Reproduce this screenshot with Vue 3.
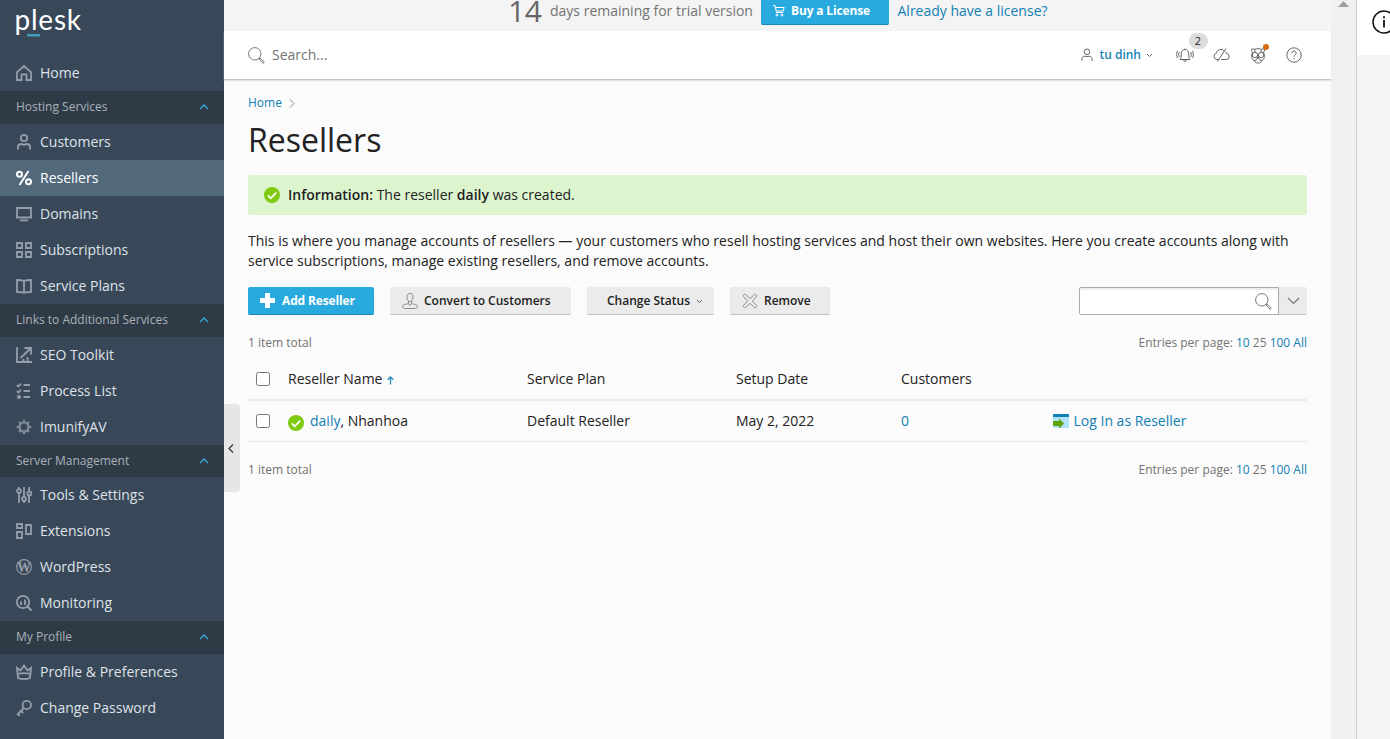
<script setup>
import { ref } from 'vue'

const sections = [
  { title: '', items: [{ label: 'Home', icon: 'home' }] },
  {
    title: 'Hosting Services',
    items: [
      { label: 'Customers', icon: 'user' },
      { label: 'Resellers', icon: 'percent', active: true },
      { label: 'Domains', icon: 'monitor' },
      { label: 'Subscriptions', icon: 'grid' },
      { label: 'Service Plans', icon: 'book' },
    ],
  },
  {
    title: 'Links to Additional Services',
    items: [
      { label: 'SEO Toolkit', icon: 'seo' },
      { label: 'Process List', icon: 'list' },
      { label: 'ImunifyAV', icon: 'gear' },
    ],
  },
  {
    title: 'Server Management',
    short: true,
    items: [
      { label: 'Tools & Settings', icon: 'sliders' },
      { label: 'Extensions', icon: 'blocks' },
      { label: 'WordPress', icon: 'wordpress' },
      { label: 'Monitoring', icon: 'monitoring' },
    ],
  },
  {
    title: 'My Profile',
    items: [
      { label: 'Profile & Preferences', icon: 'crown' },
      { label: 'Change Password', icon: 'key' },
    ],
  },
]

const icons = {
  home: '<path d="M1 15V7.2L8 1l7 6.200V15h-4.500V9.500h-5V15z"/>',
  user: '<circle cx="8" cy="4" r="3.200"/><path d="M2 15.500V13c0-2 1.500-3 3.500-3 1 0 1.500.8 2.500.8s1.500-.8 2.500-.8c2 0 3.500 1 3.500 3v2.500"/>',
  percent: '<g stroke-width="2"><circle cx="3.500" cy="4.200" r="2.500"/><circle cx="12.500" cy="11.800" r="2.500"/><path d="M12.500 1L3.500 15"/></g>',
  monitor: '<path d="M1 2h14v9.500H1zM4 14.300h8"/>',
  grid: '<path d="M1 1h5v5H1zM10 1h5v5h-5zM1 10h5v5H1zM10 10h5v5h-5z"/>',
  book: '<path d="M8 3C6.500 2 4 2 1 2v12c3 0 5.500 0 7 .7C9.500 14 12 14 15 14V2c-3 0-5.500 0-7 1zM8 3v12"/>',
  seo: '<path d="M1 0v15h15M4.500 11L14 2M8.500 1H15v6.500M7.500 15v-3M11.500 15v-5"/>',
  list: '<path d="M7.500 2H14M7.500 8H14M7.500 14H14M1 2l1.500 1.500L5 .5M1 8l1.500 1.500L5 6.500"/><circle cx="3" cy="14" r="1.200" fill="currentColor"/>',
  gear: '<g opacity=".8"><circle cx="8" cy="8" r="4.500" stroke-width="2.200"/><path stroke-width="2" d="M8 .7v2.500M8 12.800v2.500M.7 8h2.500M12.800 8h2.500M3 3l1.500 1.500M11.500 11.500L13 13M13 3l-1.500 1.500M4.500 11.500L3 13"/></g>',
  sliders: '<path d="M3 0v2M3 6v10M8 0v10M8 14v2M13 0v4M13 9v7"/><circle cx="3" cy="4" r="2"/><circle cx="8" cy="12" r="2"/><circle cx="13.300" cy="6.500" r="2"/>',
  blocks: '<path d="M1 1h5v4H1zM1 9h5v6H1zM10 2h5v9h-5z"/>',
  wordpress: '<circle cx="8" cy="8" r="7.300" stroke-width="1.200"/><text x="8" y="13.300" text-anchor="middle" textLength="14" lengthAdjust="spacingAndGlyphs" font-family="Liberation Serif" font-weight="700" font-size="15.500" fill="currentColor" stroke="none">W</text>',
  monitoring: '<circle cx="7" cy="7" r="6.200"/><path d="M11.500 11.500l4 4" stroke-width="2.200"/><path d="M5 10V6.500M9 10V4.500"/>',
  crown: '<path d="M2 14L1 4l3.500 2.500L8 1.500l3.500 5L15 4l-1 10c-3 1.500-9 1.500-12 0zM2 10c3-1.300 9-1.300 12 0"/>',
  key: '<circle cx="10.800" cy="5" r="4.200"/><path d="M7.700 8.200L1 15M2 14l2 1.800M5 11l2.200 2"/>',
}

const selectAll = ref(false)
const selectRow = ref(false)
const query = ref('')
</script>

<template>
  <div class="page">
    <aside class="sidebar">
      <div class="brand">
        <svg width="80" height="40" viewBox="0 0 80 40">
          <text class="brand-text" x="-.5" y="24" textLength="66.500">plesk</text>
          <rect x="12" y="28" width="13" height="2.500" fill="#3f9dbd" />
        </svg>
      </div>
      <nav>
        <div v-for="(s, i) in sections" :key="i">
          <div v-if="s.title" class="section" :class="{ short: s.short }">
            <span>{{ s.title }}</span>
            <svg width="10" height="6" viewBox="0 0 10 6"><path d="M1 5l4-4 4 4" /></svg>
          </div>
          <a v-for="it in s.items" :key="it.label" class="item" :class="{ active: it.active }">
            <svg width="16" height="16" viewBox="0 0 16 16" v-html="icons[it.icon]"></svg>
            <span>{{ it.label }}</span>
          </a>
        </div>
      </nav>
    </aside>

    <div class="main">
      <div class="trial">
        <span class="days">14</span>
        <span class="remain">days remaining for trial version</span>
        <a class="buy">
          <svg width="12" height="13" viewBox="0 0 12 13" fill="none" stroke="#fff"><path d="M0 1.500h2l1.500 7h6.800M2.500 3.500h8.700l-1 3.500H3.300" /><circle cx="4" cy="11" r="1" /><circle cx="9" cy="11" r="1" /></svg>
          <span>Buy a License</span>
        </a>
        <a class="link have">Already have a license?</a>
      </div>

      <header class="topbar">
        <svg class="mag" width="17" height="17" viewBox="0 0 17 17"><circle cx="6.800" cy="6.800" r="6.200" /><path d="M11 12l1-1 4.300 4-1.300 1.300z" /></svg>
        <span class="ph">Search...</span>
        <div class="tools">
          <svg class="t-user" width="12" height="14" viewBox="0 0 12 14"><circle cx="6" cy="3.800" r="2.800" /><path d="M1 13v-2.300C1 9 2.200 8.200 4 8.200c.8 0 1.200.5 2 .5s1.200-.5 2-.5c1.800 0 3 .8 3 2.500V13" /></svg>
          <span class="uname">tu dinh</span>
          <svg class="t-chev" width="7" height="5" viewBox="0 0 7 5"><path d="M1 1l2.500 2.500L6 1" /></svg>
          <div class="bell">
            <svg width="18" height="15" viewBox="0 0 18 15"><path d="M4 11.500c1.200-1 1.200-2.500 1.200-5C5.200 3 7 1.500 9 1.500s3.800 1.500 3.800 5c0 2.500 0 4 1.200 5zM7.500 12c.2 1.700 2.800 1.700 3 0M9 .5v1M3.300 4c-.8 1.300-.8 3.700 0 5M1.600 2.800c-1.300 2-1.300 5.400 0 7.400M14.700 4c.8 1.300.8 3.700 0 5M16.400 2.800c1.300 2 1.300 5.400 0 7.400" /></svg>
            <b class="count">2</b>
          </div>
          <svg class="t-cloud" width="17" height="14" viewBox="0 0 17 14"><path d="M6 11.500H4A3.200 3.200 0 0 1 3.500 5.200C4 2.500 6 1.500 8 1.500c1 0 2 .3 2.800 1M8 11.500h5.200a2.900 2.900 0 0 0 .2-5.900c0-.8-.2-1.500-.6-2.100M4.500 13.500L13 .5" /></svg>
          <div class="bear">
            <svg width="16" height="17" viewBox="0 0 16 17"><path d="M2.500 5C.8 4 1 1.800 2.800 1.800c.8 0 1.400.2 1.900.6 2-1 4.600-1 6.600 0 .5-.4 1.100-.6 1.900-.6 1.800 0 2 2.200.3 3.200M4.700 2.400L5 5M11.300 2.400L11 5M2.600 5C1.600 7 1.500 9 1.700 10.500 2.200 12.300 3 13 4 13.500M13.400 5c1 2 1.100 4 .9 5.500-.5 1.800-1.300 2.500-2.300 3M3.800 12.500c0 4.700 8.400 4.700 8.400 0M6.800 10h2.400L8 11.300zM5.500 14c.3-1.800 1.300-2.500 2.500-2.700 1.200.2 2.200.9 2.500 2.700" /><circle cx="4.900" cy="8" r="2.700" /><circle cx="11.100" cy="8" r="2.700" /></svg>
            <i class="dot"></i>
          </div>
          <svg class="t-help" width="16" height="16" viewBox="0 0 16 16"><circle cx="8" cy="8" r="7.200" /><path d="M5.800 6.300c0-3 4.400-2.800 4.400-.2C10.200 8 8 7.800 8 9.800M8 11v1.300" /></svg>
        </div>
      </header>

      <main class="content">
        <div class="crumbs">
          <a class="link">Home</a>
          <svg width="6" height="9" viewBox="0 0 6 9"><path d="M1 .5l4 4-4 4" /></svg>
        </div>
        <h1>Resellers</h1>

        <div class="info">
          <svg width="16" height="16" viewBox="0 0 16 16"><circle cx="8" cy="8" r="8" fill="#7fca10" /><path d="M3.800 8.300l3 3 5.400-5.600" fill="none" stroke="#fff" stroke-width="1.800" /></svg>
          <p><b>Information:</b> The reseller <b>daily</b> was created.</p>
        </div>

        <p class="desc">This is where you manage accounts of resellers — your customers who resell hosting services and host their own websites. Here you create accounts along with<br />service subscriptions, manage existing resellers, and remove accounts.</p>

        <div class="actions">
          <button class="btn primary">
            <svg width="15" height="15" viewBox="0 0 15 15"><path d="M5 0h5v5h5v5h-5v5H5v-5H0V5h5z" fill="#fff" /></svg>
            <span class="add">Add Reseller</span>
          </button>
          <button class="btn convert">
            <svg class="g" width="16" height="16" viewBox="0 0 16 16"><path d="M8 .5C6.200.5 5 1.500 5 3.500 5 6 6 7.500 6.500 8v2.500c-2 .8-6 .8-6 3 0 1.500 1 2 2 2h11c1 0 2-.5 2-2 0-2.200-4-2.200-6-3V8C10 7.500 11 6 11 3.500 11 1.500 9.800.5 8 .5zM6.500 8c1 .8 2 .8 3 0M6.500 10.500L8 12.500l1.500-2" /></svg>
            <span>Convert to Customers</span>
          </button>
          <button class="btn status">
            <span>Change Status</span>
            <svg class="g" width="7" height="5" viewBox="0 0 7 5"><path d="M1 1l2.500 2.500L6 1" /></svg>
          </button>
          <button class="btn remove">
            <svg class="g" width="16" height="16" viewBox="0 0 16 16"><path d="M3.300 1.300L8 5.600l4.700-4.300c1.200-.3 2.300.8 2 2L10.400 8l4.300 4.700c.3 1.200-.8 2.300-2 2L8 10.400l-4.700 4.300c-1.200.3-2.300-.8-2-2L5.600 8 1.300 3.300c-.3-1.200.8-2.300 2-2z" /></svg>
            <span>Remove</span>
          </button>
          <div class="find">
            <div class="box">
              <input v-model="query" type="text" />
              <svg class="mag" width="17" height="17" viewBox="0 0 17 17"><circle cx="6.800" cy="6.800" r="6.200" /><path d="M11 12l1-1 4.300 4-1.300 1.300z" /></svg>
            </div>
            <button class="drop"><svg width="13" height="8" viewBox="0 0 13 8"><path d="M1 1l5.500 5.500L12 1" /></svg></button>
          </div>
        </div>

        <div class="pager">
          <span>1 item total</span>
          <span>Entries per page: <a>10</a> 25 <a>100</a> <a>All</a></span>
        </div>

        <div class="table">
          <div class="row head">
            <span class="chk"><input v-model="selectAll" type="checkbox" /></span>
            <span>Reseller Name <svg class="sort" width="7" height="9" viewBox="0 0 7 9"><path d="M3.500 8.500v-7M.7 3.800L3.500 1l2.800 2.800" /></svg></span>
            <span>Service Plan</span>
            <span>Setup Date</span>
            <span>Customers</span>
            <span></span>
          </div>
          <div class="row">
            <span class="chk"><input v-model="selectRow" type="checkbox" /></span>
            <span class="name"><svg class="ok" width="16" height="16" viewBox="0 0 16 16"><circle cx="8" cy="8" r="8" fill="#7fca10" /><path d="M3.800 8.300l3 3 5.400-5.600" fill="none" stroke="#fff" stroke-width="1.800" /></svg><span><a class="link">daily</a>, Nhanhoa</span></span>
            <span>Default Reseller</span>
            <span>May 2, 2022</span>
            <span><a class="link">0</a></span>
            <span class="login">
              <svg width="16" height="15" viewBox="0 0 16 15"><rect width="16" height="14" rx="1" fill="#aee3fa" /><path d="M0 3V1q0-1 1-1h14q1 0 1 1v2z" fill="#0f7fb5" /><path d="M0 7h6V4.500L11 9.500l-5 5V12H0z" fill="#5fa300" /></svg>
              <a class="link">Log In as Reseller</a>
            </span>
          </div>
        </div>

        <div class="pager bottom">
          <span>1 item total</span>
          <span>Entries per page: <a>10</a> 25 <a>100</a> <a>All</a></span>
        </div>
      </main>

      <div class="collapse">
        <svg width="6" height="9" viewBox="0 0 6 9"><path d="M5 .5l-4 4 4 4" /></svg>
      </div>
    </div>

    <div class="scroll"><svg width="11" height="6" viewBox="0 0 11 6"><path d="M0 6L5.500 0 11 6z" fill="#9e9e9e" /></svg></div>

    <div class="side">
      <div class="side-top">
        <svg width="24" height="24" viewBox="0 0 24 24" fill="none" stroke="#111" stroke-width="1.500"><circle cx="12" cy="12" r="11" /><path d="M12 10v7.500M12 6.200v2" stroke-width="1.800" /></svg>
      </div>
    </div>
  </div>
</template>

<style>
body { margin: 0; overflow: hidden; }
</style>

<style scoped>
* { box-sizing: border-box; }
.page { display: flex; width: 1390px; height: 739px; overflow: hidden; font: 14px/20px "Open Sans", sans-serif; color: #222; background: #fbfbfb; }
svg { display: block; flex: none; }
p, h1 { margin: 0; }
.link, .pager a { color: #1280b3; }

.sidebar { width: 224px; flex: none; background: #394859; }
.brand { height: 55px; padding: 6px 0 0 15px; }
.brand svg { overflow: visible; }
.brand-text { font-family: Lato, sans-serif; font-weight: 400; font-size: 28px; fill: #fff; }
.item { display: flex; align-items: center; gap: 8px; height: 36px; padding: 0 16px; color: #dfe3e8; }
.item svg { fill: none; stroke: currentColor; color: #949eaa; stroke-width: 1.800; overflow: visible; }
.item.active { background: #52697c; color: #fff; }
.item.active svg { color: #fff; }
.section { display: flex; align-items: center; justify-content: space-between; height: 33px; padding: 0 15px 1px 16px; background: #2e3b47; color: #abb1b8; font-size: 12px; }
.section.short { height: 32px; padding-bottom: 0; }
.section svg { fill: none; stroke: #35a9d6; stroke-width: 1.300; }

.main { position: relative; width: 1107px; flex: none; }
.trial { display: flex; align-items: center; height: 31px; padding: 0 0 9px 284px; background: #f4f4f4; }
.days { width: 34px; font-size: 30px; line-height: 22px; font-weight: 400; letter-spacing: -0.500px; color: #666; margin-right: 8px; }
.remain { width: 211px; color: #737373; white-space: nowrap; }
.buy { display: flex; align-items: center; gap: 6px; width: 128px; height: 28px; padding: 0 12px; background: #28aade; border-bottom: 1px solid #1787b5; border-radius: 2px; color: #fff; font-size: 12px; font-weight: 700; letter-spacing: -0.150px; white-space: nowrap; }
.have { margin-left: 8.500px; }
.topbar { display: flex; align-items: center; height: 49px; padding: 0 29.500px 0 24px; background: #fff; border-bottom: 1px solid #c6c6c6; box-shadow: 0 1px 1px #e4e4e4; }
.mag { fill: none; stroke: #777; stroke-width: 1; }
.ph { margin-left: 7px; color: #737373; }
.tools { display: flex; align-items: center; margin-left: auto; }
.tools svg { fill: none; stroke: #666; stroke-width: 1; }
.uname { margin: 0 5px 0 6px; font-size: 12px; font-weight: 600; color: #1785b6; }
.t-chev { margin-right: 23px; }
.bell, .bear { position: relative; }
.count { position: absolute; left: 12.500px; top: -15px; width: 19px; height: 16px; border-radius: 8px; background: #dcdcdc; font-size: 11px; font-weight: 400; line-height: 16px; text-align: center; }
.t-cloud { margin: 0 20px 0 18.500px; }
.dot { position: absolute; left: 13px; top: -3px; width: 6px; height: 6px; border-radius: 50%; background: #d96c0d; }
.t-help { margin-left: 20px; }

.content { padding: 13px 24px 0; }
.crumbs { display: flex; align-items: center; gap: 7px; font-size: 12px; height: 20px; }
.crumbs svg { fill: none; stroke: #8a8a8a; }
h1 { height: 48px; margin-top: 2px; font-size: 32px; line-height: 50px; font-weight: 400; }
.info { display: flex; align-items: center; gap: 8px; height: 40px; margin-top: 12px; padding: 0 16px; background: #dcf5cf; border-radius: 2px; }
.info b { font-weight: 600; }
.desc { margin-top: 16px; white-space: nowrap; letter-spacing: 0.005px; }
.actions { display: flex; align-items: flex-start; gap: 16px; margin-top: 16px; height: 28px; }
.btn { display: flex; align-items: center; height: 28px; padding: 0 12px; border: 0; border-bottom: 1px solid #c0c0c0; border-radius: 2px; background: #ebebeb; color: #222; font: 600 12px/20px "Open Sans", sans-serif; white-space: nowrap; }
.btn.primary { width: 126px; gap: 7px; background: #28aade; border-color: #1787b5; color: #fff; font-weight: 700; }
.add { letter-spacing: -0.150px; }
.btn.convert { width: 181px; gap: 6px; }
.btn.status { width: 127px; padding-left: 20px; gap: 6px; }
.btn.status .g { margin-top: 2px; stroke: #666; }
.btn.remove { width: 100px; gap: 6px; }
.g { fill: none; stroke: #8d8d8d; }
.find { display: flex; margin-left: auto; }
.box { display: flex; align-items: center; width: 200px; height: 28px; padding-right: 6px; background: #fff; border: 1px solid #ababab; border-radius: 2px 0 0 2px; box-shadow: inset 0 2px 1px #eee; }
.box input { flex: 1; min-width: 0; height: 24px; border: 0; outline: 0; background: transparent; }
.drop { display: flex; align-items: center; justify-content: center; width: 28px; height: 28px; padding: 0; border: 0; border-bottom: 1px solid #c0c0c0; border-radius: 0 2px 2px 0; background: #ebebeb; }
.drop svg { fill: none; stroke: #777; stroke-width: 1.200; }
.pager { display: flex; justify-content: space-between; margin-top: 18px; font-size: 12px; color: #737373; }
.table { margin-top: 6px; }
.row { display: grid; grid-template-columns: 40px 239px 209px 165px 152px 1fr; align-items: center; height: 41px; border-bottom: 1px solid #e6e6e6; }
.row.head { height: 42px; border-bottom: 2px solid #ebebeb; }
.chk { padding-left: 8px; }
.chk input { display: block; width: 14px; height: 14px; margin: 0; appearance: none; border: 1px solid #767676; border-radius: 2.500px; background: #fff; }
.sort { display: inline-block; margin-left: 1px; fill: none; stroke: #2a8fbd; stroke-width: 1.300; vertical-align: -1px; }
.name { display: flex; align-items: center; gap: 6px; }
.ok { margin-top: 3px; }
.login { display: flex; align-items: center; gap: 4.500px; }
.bottom { margin-top: 18px; }
.collapse { position: absolute; left: 0; top: 404px; display: flex; align-items: center; justify-content: flex-start; width: 16px; height: 88px; padding-left: 4px; background: #e6e6e6; border-radius: 0 4px 4px 0; }
.collapse svg { fill: none; stroke: #333; stroke-width: 1.200; }

.scroll { width: 25px; flex: none; background: #f0f0f0; padding: 1px 0 0 7px; }
.side { width: 34px; flex: none; border-left: 1px solid #ccc; background: #f4f4f4; }
.side-top { height: 55px; padding: 10px 0 0 15px; background: #fff; overflow: hidden; }
</style>
